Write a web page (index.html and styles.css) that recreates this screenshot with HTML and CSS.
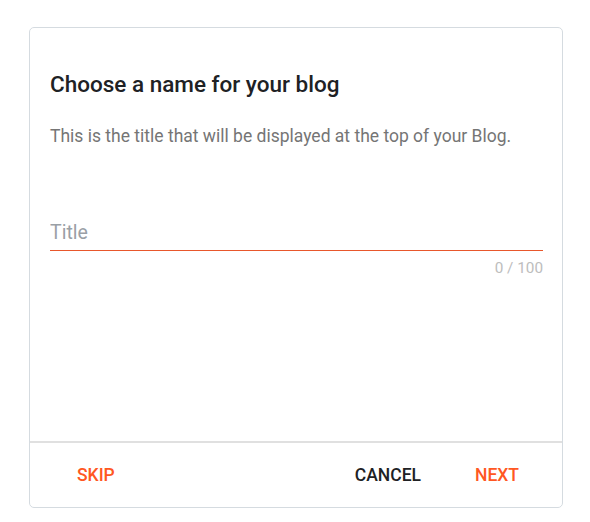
FILE: index.html
```html
<!DOCTYPE html>
<html lang="en">
<head>
    <meta charset="UTF-8">
    <meta name="viewport" content="width=device-width, initial-scale=1.0">
    <title>Choose a name for your blog</title>
    <link rel="stylesheet" href="styles.css">
</head>
<body>
    <div class="page">
        <div class="dialog">
            <div class="dialog-body">
                <h1 class="dialog-title">Choose a name for your blog</h1>
                <p class="dialog-text">This is the title that will be displayed at the top of your Blog.</p>
                <div class="field">
                    <input class="field-input" type="text" placeholder="Title" maxlength="100">
                </div>
                <div class="counter">0 / 100</div>
            </div>
            <div class="dialog-actions">
                <button class="btn btn-accent">Skip</button>
                <div class="actions-right">
                    <button class="btn">Cancel</button>
                    <button class="btn btn-accent">Next</button>
                </div>
            </div>
        </div>
    </div>
</body>
</html>
```

FILE: styles.css
```css
body {
  margin: 0;
  font-family: Roboto, "Liberation Sans", Arial, sans-serif;
  background: #fff;
}
.page {
  padding: 27px 0 0 29px;
}
.dialog {
  width: 534px;
  height: 481px;
  box-sizing: border-box;
  border: 1px solid #d5dbe0;
  border-radius: 5px;
  display: flex;
  flex-direction: column;
}
.dialog-body {
  flex: 1;
  padding: 42px 19px 0 20px;
}
.dialog-title {
  margin: 0;
  font-size: 22.5px;
  line-height: 28px;
  font-weight: 500;
  color: #202124;
}
.dialog-text {
  margin: 26px 0 0;
  font-size: 17.5px;
  line-height: 24px;
  color: #757575;
}
.field {
  margin-top: 72px;
  border-bottom: 1px solid #e8572c;
}
.field-input {
  display: block;
  width: 100%;
  box-sizing: border-box;
  border: none;
  outline: none;
  padding: 0 0 6px;
  margin: 0;
  font-family: inherit;
  font-size: 19.5px;
  line-height: 24px;
  height: 30px;
  color: #202124;
}
.field-input::placeholder {
  color: #9aa0a6;
}
.counter {
  margin-top: 7px;
  text-align: right;
  font-size: 15.3px;
  line-height: 20px;
  color: #bdbdbd;
}
.dialog-actions {
  height: 64px;
  border-top: 2px solid #e0e0e0;
  display: flex;
  align-items: center;
  justify-content: space-between;
  padding: 0 27px 0 31px;
}
.actions-right {
  display: flex;
  gap: 22px;
}
.btn {
  border: none;
  background: none;
  padding: 8px 16px;
  font-family: inherit;
  font-size: 17.5px;
  font-weight: 500;
  text-transform: uppercase;
  color: #202124;
  cursor: pointer;
}
.btn-accent {
  color: #ff5722;
}
```
